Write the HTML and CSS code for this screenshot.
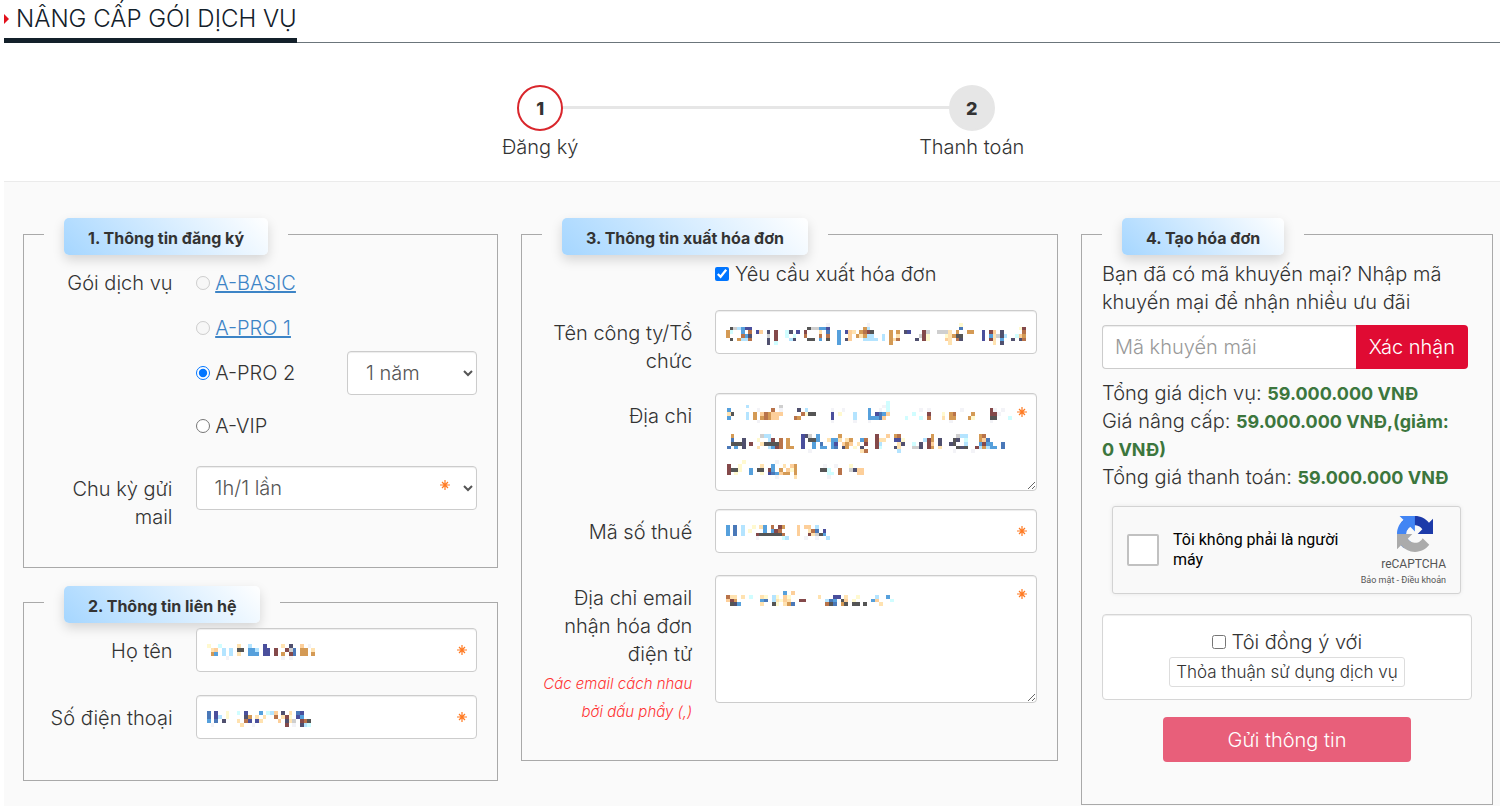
FILE: index.html
```html
<!DOCTYPE html>
<html lang="vi">
<head>
<meta charset="utf-8">
<title>Nâng cấp gói dịch vụ</title>
<link rel="stylesheet" href="styles.css">
</head>
<body>
<svg class="defs" aria-hidden="true">
  <symbol id="star" viewBox="0 0 10 10">
    <path d="M5 0V10M0 5H10M2 2L8 8M8 2L2 8" fill="none" stroke="currentColor" stroke-width="1.2"/>
  </symbol>
</svg>
<main class="page">
  <header class="heading">
    <h1 class="heading__title"><span class="heading__arrow"></span>NÂNG CẤP GÓI DỊCH VỤ</h1>
  </header>

  <ol class="steps">
    <li class="step step--active"><span class="step__dot">1</span><span class="step__name">Đăng ký</span></li>
    <li class="step"><span class="step__dot">2</span><span class="step__name">Thanh toán</span></li>
  </ol>

  <form class="board">
    <div class="stack">
      <fieldset class="panel">
        <legend class="panel__legend"><span class="chip">1. Thông tin đăng ký</span></legend>
        <div class="row">
          <span class="row__label">Gói dịch vụ</span>
          <div class="plans">
            <div class="plan"><label class="plan__pick"><input class="tick" type="radio" name="plan" disabled> <a class="link" href="#basic">A-BASIC</a></label></div>
            <div class="plan"><label class="plan__pick"><input class="tick" type="radio" name="plan" disabled> <a class="link" href="#pro1">A-PRO 1</a></label></div>
            <div class="plan">
              <label class="plan__pick"><input class="tick" type="radio" name="plan" checked> A-PRO 2</label>
              <select class="control plan__term" aria-label="Thời hạn"><option>1 năm</option></select>
            </div>
            <div class="plan plan--last"><label class="plan__pick"><input class="tick" type="radio" name="plan"> A-VIP</label></div>
          </div>
        </div>
        <div class="row">
          <label class="row__label" for="cycle">Chu kỳ gửi mail</label>
          <div class="field">
            <select class="control" id="cycle"><option>1h/1 lần</option></select>
            <svg class="star star--select"><use href="#star"/></svg>
          </div>
        </div>
      </fieldset>

      <fieldset class="panel panel--contact">
        <legend class="panel__legend"><span class="chip">2. Thông tin liên hệ</span></legend>
        <div class="row">
          <label class="row__label" for="name">Họ tên</label>
          <div class="field">
            <input class="control" id="name" type="text">
            <svg class="mosaic" data-mosaic="name"></svg>
            <svg class="star"><use href="#star"/></svg>
          </div>
        </div>
        <div class="row">
          <label class="row__label" for="phone">Số điện thoại</label>
          <div class="field">
            <input class="control" id="phone" type="tel">
            <svg class="mosaic" data-mosaic="phone"></svg>
            <svg class="star"><use href="#star"/></svg>
          </div>
        </div>
      </fieldset>
    </div>

    <fieldset class="panel">
      <legend class="panel__legend"><span class="chip">3. Thông tin xuất hóa đơn</span></legend>
      <div class="row row--loose">
        <label class="row__only"><input class="tick" type="checkbox" checked> Yêu cầu xuất hóa đơn</label>
      </div>
      <div class="row">
        <label class="row__label" for="company">Tên công ty/Tổ chức</label>
        <div class="field">
          <input class="control" id="company" type="text">
          <svg class="mosaic mosaic--company" data-mosaic="company"></svg>
        </div>
      </div>
      <div class="row">
        <label class="row__label" for="address">Địa chỉ</label>
        <div class="field">
          <textarea class="control control--area" id="address"></textarea>
          <svg class="mosaic mosaic--address" data-mosaic="address"></svg>
          <svg class="star star--top"><use href="#star"/></svg>
        </div>
      </div>
      <div class="row row--loose">
        <label class="row__label" for="tax">Mã số thuế</label>
        <div class="field">
          <input class="control" id="tax" type="text">
          <svg class="mosaic" data-mosaic="tax"></svg>
          <svg class="star"><use href="#star"/></svg>
        </div>
      </div>
      <div class="row">
        <label class="row__label" for="email">Địa chỉ email nhận hóa đơn điện tử <em class="hint">Các email cách nhau bởi dấu phẩy (,)</em></label>
        <div class="field">
          <textarea class="control control--tall" id="email"></textarea>
          <svg class="mosaic" data-mosaic="email"></svg>
          <svg class="star star--top"><use href="#star"/></svg>
        </div>
      </div>
    </fieldset>

    <fieldset class="panel">
      <legend class="panel__legend"><span class="chip">4. Tạo hóa đơn</span></legend>
      <label class="promo-text" for="promo">Bạn đã có mã khuyến mại? Nhập mã khuyến mại để nhận nhiều ưu đãi</label>
      <div class="promo">
        <input class="control promo__input" id="promo" type="text" placeholder="Mã khuyến mãi">
        <button class="promo__button" type="button">Xác nhận</button>
      </div>
      <div class="totals">
        <p class="totals__line">Tổng giá dịch vụ: <strong class="money">59.000.000 VNĐ</strong></p>
        <p class="totals__line">Giá nâng cấp: <strong class="money">59.000.000 VNĐ,(giảm: 0&nbsp;VNĐ)</strong></p>
        <p class="totals__line">Tổng giá thanh toán: <strong class="money">59.000.000 VNĐ</strong></p>
      </div>
      <div class="captcha">
        <input class="captcha__box" id="human" type="checkbox">
        <label class="captcha__label" for="human">Tôi không phải là người máy</label>
        <div class="captcha__brand">
          <svg class="captcha__logo" viewBox="0 0 64 64" aria-hidden="true">
            <path fill="#1c3aa9" d="M64 31.955a33.3 33.3 0 0 0-.014-1.37V4.687l-7.16 7.16C50.967 4.674 42.053.093 32.07.093c-10.39 0-19.622 4.96-25.458 12.64l11.736 11.86a15.55 15.55 0 0 1 4.754-5.334c2.05-1.6 4.952-2.906 8.968-2.906.485 0 .86.057 1.135.163 4.976.393 9.288 3.14 11.828 7.124l-8.307 8.307L64 31.953"/>
            <path fill="#4285f4" d="M31.862.094a33.4 33.4 0 0 0-1.37.014H4.594l7.16 7.16C4.58 13.127 0 22.04 0 32.023c0 10.39 4.96 19.622 12.64 25.458L24.5 45.746a15.55 15.55 0 0 1-5.334-4.754c-1.6-2.05-2.906-4.952-2.906-8.968 0-.485.057-.86.163-1.135.393-4.976 3.14-9.288 7.124-11.828l8.307 8.307L31.86.095"/>
            <path fill="#ababab" d="M.001 32.045a33.4 33.4 0 0 0 .014 1.37v25.898l7.16-7.16c5.86 7.173 14.774 11.754 24.756 11.754 10.39 0 19.622-4.96 25.458-12.64l-11.736-11.86a15.55 15.55 0 0 1-4.754 5.334c-2.05 1.6-4.952 2.906-8.968 2.906-.485 0-.86-.057-1.135-.163-4.976-.393-9.288-3.14-11.828-7.124l8.307-8.307c-10.522.04-22.4.066-27.295-.005"/>
          </svg>
          <span class="captcha__name">reCAPTCHA</span>
          <span class="captcha__links"><a class="captcha__link" href="#privacy">Bảo mật</a> - <a class="captcha__link" href="#terms">Điều khoản</a></span>
        </div>
      </div>
      <div class="agree">
        <label class="agree__label"><input class="tick" type="checkbox"> Tôi đồng ý với</label>
        <button class="agree__terms" type="button">Thỏa thuận sử dụng dịch vụ</button>
      </div>
      <button class="submit" type="button">Gửi thông tin</button>
    </fieldset>
  </form>
</main>
<script src="script.js"></script>
</body>
</html>
```
FILE: styles.css
```css
*, *::before, *::after { box-sizing: border-box; }

body {
  margin: 0;
  background: #fff;
  color: #333;
  font-family: Inter, "Open Sans", "Liberation Sans", sans-serif;
  font-size: 20px;
  font-weight: 300;
  line-height: 28px;
}

.defs { position: absolute; width: 0; height: 0; }
.page { padding-left: 4px; }

.heading {
  display: flex;
  border-bottom: 1px solid #6b757b;
}
.heading__title {
  display: flex;
  align-items: center;
  gap: 7px;
  height: 43px;
  margin: 0 0 -1px;
  border-bottom: 5px solid #13202a;
  color: #13202a;
  font-size: 24px;
  font-weight: 300;
  line-height: 36px;
  white-space: nowrap;
}
.heading__arrow {
  border: solid transparent;
  border-width: 5px 0 5px 5px;
  border-left-color: #e2111c;
}

.steps {
  display: flex;
  justify-content: center;
  margin: 0;
  padding: 42px 0 20px 8px;
  list-style: none;
}
.step {
  display: flex;
  flex: 0 0 29%;
  flex-direction: column;
  align-items: center;
  position: relative;
}
.step + .step::before {
  content: "";
  position: absolute;
  top: 21px;
  right: 50%;
  width: 100%;
  height: 3px;
  background: #e6e6e6;
}
.step__dot {
  position: relative;
  z-index: 1;
  width: 46px;
  height: 46px;
  border: 2px solid #e6e6e6;
  border-radius: 50%;
  background: #e6e6e6;
  font-size: 18px;
  font-weight: 800;
  line-height: 44px;
  text-align: center;
}
.step--active .step__dot { border-color: #d9262c; background: #fff; }
.step__name { margin-top: 2px; }

.board {
  display: grid;
  grid-template-columns: 475fr 537fr 412fr;
  align-items: start;
  gap: 23px;
  padding: 36px 7px 2px 19px;
  border-top: 1px solid #ebebeb;
  background: #fafafa;
}
.stack { display: grid; gap: 18px; }

.panel {
  min-width: 0;
  margin: 0;
  padding: 10px 20px 18px;
  border: 1px solid #a9a9a9;
}
.panel__legend {
  height: 32px;
  padding: 0 20px;
}
.chip {
  display: block;
  padding: 3px 24px 0;
  border-radius: 5px;
  background: linear-gradient(45deg, #a5d6ff, #fff);
  box-shadow: 0 5px 12px rgba(0, 0, 0, .15);
  font-size: 16px;
  font-weight: 700;
  line-height: 34px;
}

.row {
  display: grid;
  grid-template-columns: 35% 65%;
  margin-bottom: 18px;
}
.row--loose { margin-bottom: 22px; }
.panel--contact .row { margin-bottom: 23px; }
.row__label {
  padding: 9px 23px 0 0;
  text-align: right;
}
.row__only { grid-column: 2; }
.hint {
  display: block;
  margin: 2px 0 -2px -20px;
  color: #ff3434;
  font-size: 15px;
}

.plan {
  display: flex;
  justify-content: space-between;
  align-items: center;
  height: 45px;
}
.plan--last { margin-top: 8px; }
.plan__term { flex: 0 0 130px; }
.link { color: #3d84c6; text-decoration: underline; }

.tick {
  width: 14px;
  height: 14px;
  margin: 0;
}

.field { position: relative; }
.control {
  display: block;
  width: 100%;
  height: 44px;
  padding: 6px 12px;
  border: 1px solid #ccc;
  border-radius: 4px;
  background-color: #fff;
  box-shadow: inset 0 1px 1px rgba(0, 0, 0, .075);
  color: #555;
  font: inherit;
}
select.control { padding: 6px 0 6px 14px; }
.plan .control { width: auto; }
.control::placeholder { color: #999; opacity: 1; }
.control--area { height: 98px; }
.control--tall { height: 128px; }

.star {
  position: absolute;
  top: 17px;
  right: 10px;
  width: 10px;
  height: 10px;
  color: #ff7a22;
}
.star--select { top: 14px; right: 27px; }
.star--top { top: 14px; }
.mosaic {
  position: absolute;
  top: 16px;
  left: 11px;
  pointer-events: none;
}
.mosaic--company { top: 13px; }
.mosaic--address { top: 8px; left: 12px; }

.promo-text { display: block; }
.promo {
  display: flex;
  margin: 9px 4px 10px 0;
}
.promo__input {
  flex: 1;
  min-width: 0;
  border-right: 0;
  border-radius: 4px 0 0 4px;
}
.promo__button {
  padding: 0 13px;
  border: 0;
  border-radius: 0 4px 4px 0;
  background: #e00b33;
  color: #fff;
  font: inherit;
  white-space: nowrap;
}
.totals__line { margin: 0; }
.money {
  color: #3c763d;
  font-size: 18px;
  font-weight: 700;
  line-height: 20px;
}

.captcha {
  display: flex;
  align-items: center;
  gap: 14px;
  height: 88px;
  margin: 15px 11px 20px 10px;
  padding: 0 14px;
  border: 1px solid #d3d3d3;
  border-radius: 3px;
  background: #f9f9f9;
  box-shadow: 0 0 4px rgba(0, 0, 0, .08);
  color: #000;
  font-family: Roboto, "Liberation Sans", sans-serif;
  font-weight: 400;
}
.captcha__box {
  appearance: none;
  flex: 0 0 32px;
  height: 32px;
  margin: 0;
  border: 2px solid #c1c1c1;
  border-radius: 2px;
  background: #fff;
}
.captcha__label {
  flex: 1;
  font-size: 16px;
  line-height: 20px;
}
.captcha__brand {
  display: flex;
  flex: 0 0 80px;
  flex-direction: column;
  align-items: flex-end;
  padding-top: 4px;
  color: #555;
}
.captcha__logo { width: 36px; height: 36px; margin-right: 13px; }
.captcha__name { margin-top: 4px; font-size: 12px; line-height: 16px; }
.captcha__links { font-size: 9px; line-height: 16px; white-space: nowrap; }
.captcha__link { color: inherit; text-decoration: none; }

.agree {
  display: flex;
  flex-direction: column;
  align-items: center;
  padding: 13px 0 12px;
  border: 1px solid #d6d6d6;
  border-radius: 4px;
  background: #fff;
  box-shadow: inset 0 1px 1px rgba(0, 0, 0, .075);
}
.agree__terms {
  height: 30px;
  margin-top: 1px;
  padding: 0 6px;
  border: 1px solid #ddd;
  border-radius: 3px;
  background: #fff;
  color: #333;
  font: inherit;
  font-size: 17px;
  white-space: nowrap;
}
.submit {
  display: block;
  width: 248px;
  height: 45px;
  margin: 17px auto 24px;
  border: 0;
  border-radius: 4px;
  background: #e85f7a;
  color: #fff;
  font: inherit;
}
```
FILE: script.js
```js
// Masked values. A row is a list of runs: the first column, then one colour letter per cell.
const COLORS = {
  y: "#fff9cf", p: "#ffe2b0", a: "#fdcf9a", o: "#d49a55", r: "#b8734a",
  m: "#84494a", k: "#555555", v: "#50506e", n: "#4a4f9c", b: "#4a78b8",
  s: "#56a0dc", l: "#b4e4ff", c: "#d0fdff", g: "#cfcfcf", w: "#f3f3f7"
};

const MASKS = {
  name: { width: 108, height: 16, columns: 29, rows: [
    "0y 3c 8p 11l 15n 20p 22v 25a 27w",
    "1pa 4l 6l 8kk 11ss 13l 15nn 18m 21mg 23b 25oo 28p",
    "1os 4l 6l 8p 11sss 15nn 18m 20o 22mb 25oo 28o",
    "5w 20w 22w"
  ] },
  phone: { width: 104, height: 16, columns: 28, rows: [
    "0b 2n 5y 8c 10n 14s 16cl 18a 20v 22p 24bn",
    "0b 2nl 5y 10vo 13p 15p 18r 20pm 22y 24ns",
    "0s 2b 4v 8p 10rn 13n 14p 19a 21vp 23g 25mrk",
    "1w 9p 12w 21m 23w 25vl 27c"
  ] },
  company: { width: 300, height: 22, columns: 81, rows: [
    "27w 38w 63y",
    "1kg 3ls 5nn 22kgg 25ss 27n 37om 38l 63b 79y 80m",
    "0oc 4s 6r 8na 11v 13m 16cv 19n 21m 25p 27b 30s 32nap 36orm 39k 44o 46o 48vn 53my 54g 57gggk 60p 62o 65oo 69n 71ma 74v 80r",
    "0o 4r 5sv 11g 13m 16c 18c 21r 25r 27r 30s 33a 35opoll 42l 44o 46p 52g 53my 59yp 61okk 69n 71sp 73gv 75l 78c 79ao",
    "1k 3ol 5lr 11v 13m 17lv 22kk 25s 27k 30s 32va 37llll 42l 44op 46r 51v 53my 59ap 62rv 69n 71mp 74s 77v 79vr",
    "11v 13c 30s 44o 60p 72p 74v"
  ] },
  address: { width: 285, height: 78, columns: 77, rows: [
    "43c",
    "5l 14g 42wc",
    "0s 8w 12r 14w 19v 21l 28w 31w 38s 41w 43c 52w 54w 63w 71mw 74w",
    "0pk 5l 7o 9aroa 13aa 20ry 22kk 28n 30y 34l 38s 40nbs 43a 50c 54m 58y 60or 66o 71mm 73w",
    "0s 5l 7o 9oroo 12aa 18ro 28n 34l 38ss 40sb 42a 48c 52c 54r 58p 60oo 65oy 71kk 76c",
    "8w 28w 34w 38w 60w 71w",
    "", "", "",
    "1o 9gll 20nvg 24s 30o 40m 43a 45or 55o 62gll 68or",
    "1b 4v 8y 11l 12m 14r 16o 20n 22kks 24s 27p 28ss 30p 32po 36s 37r 40mp 42p 45nn 47y 53l 54m 55o 57v 61kv 64c 68oa 70b",
    "1kkk 4v 6m 9p 10kkkk 14r 16o 20n 23s 25b 28sn 31ao 33a 35p 37m 40ml 46pv 50c 52v 54ma 57v 60vk 64l 68sm 70ss 74b",
    "0b 2s 4v 8p 11ls 13mr 16oo 20n 23s 25ss 28sb 31vo 34y 36v 40mc 45vp 50gg 52v 54mo 57p 62kv 64k 67ml 69ols 71ss 74b",
    "22w 36p 37r 46l 61w 66w",
    "", "",
    "4y 13w",
    "0m 3y 9p 12s 15p 17a 18o 26w 29w 33y",
    "0mkk 3y 6s 8kk 11ms 14o 16ay 18o 25kk 27c 30r 33gvy 35aa",
    "0m 2y 6s 9y 11nbs 14ao 16o 18o 27cc 30r 35aa",
    "13w 18p 27w"
  ] },
  tax: { width: 104, height: 15, columns: 28, rows: [
    "0s 2b 4l 7y 9ps 12r 14mo 19a 21aa 24l",
    "0s 2b 4l 6y 10s 12sm 14r 19a 22pr 24b 26n",
    "0s 2b 4l 8mkkkkkkr 19a 22mp 24gk 26s",
    "1w 8w 15c 16l 21w 24w 27l"
  ] },
  email: { width: 168, height: 15, columns: 44, rows: [
    "15s 17a",
    "0rpp 4p 6c 9py 12ly 15ay 24p 28nn 31p 34y 39l 42s",
    "0amo 9sb 12lp 14yap 19mm 26l 27bs 30ka 33y 38sa 43c",
    "1kvs 9p 12k 13y 15pob 26rkb 30ok 33kk 36k 40p 44c"
  ] }
};

const NS = "http://www.w3.org/2000/svg";

function addCell(svg, x, y, fill) {
  const cell = document.createElementNS(NS, "rect");
  cell.setAttribute("x", x);
  cell.setAttribute("y", y);
  cell.setAttribute("width", 1);
  cell.setAttribute("height", 1);
  cell.setAttribute("fill", fill);
  svg.append(cell);
}

document.querySelectorAll("[data-mosaic]").forEach((svg) => {
  const { width, height, columns, rows } = MASKS[svg.dataset.mosaic];
  svg.setAttribute("width", width);
  svg.setAttribute("height", height);
  svg.setAttribute("viewBox", `0 0 ${columns} ${rows.length}`);
  svg.setAttribute("preserveAspectRatio", "none");
  svg.setAttribute("shape-rendering", "crispEdges");
  rows.forEach((row, y) => {
    for (const [, start, run] of row.matchAll(/(\d+)([a-z]+)/g)) {
      [...run].forEach((key, i) => addCell(svg, Number(start) + i, y, COLORS[key]));
    }
  });
});
```
